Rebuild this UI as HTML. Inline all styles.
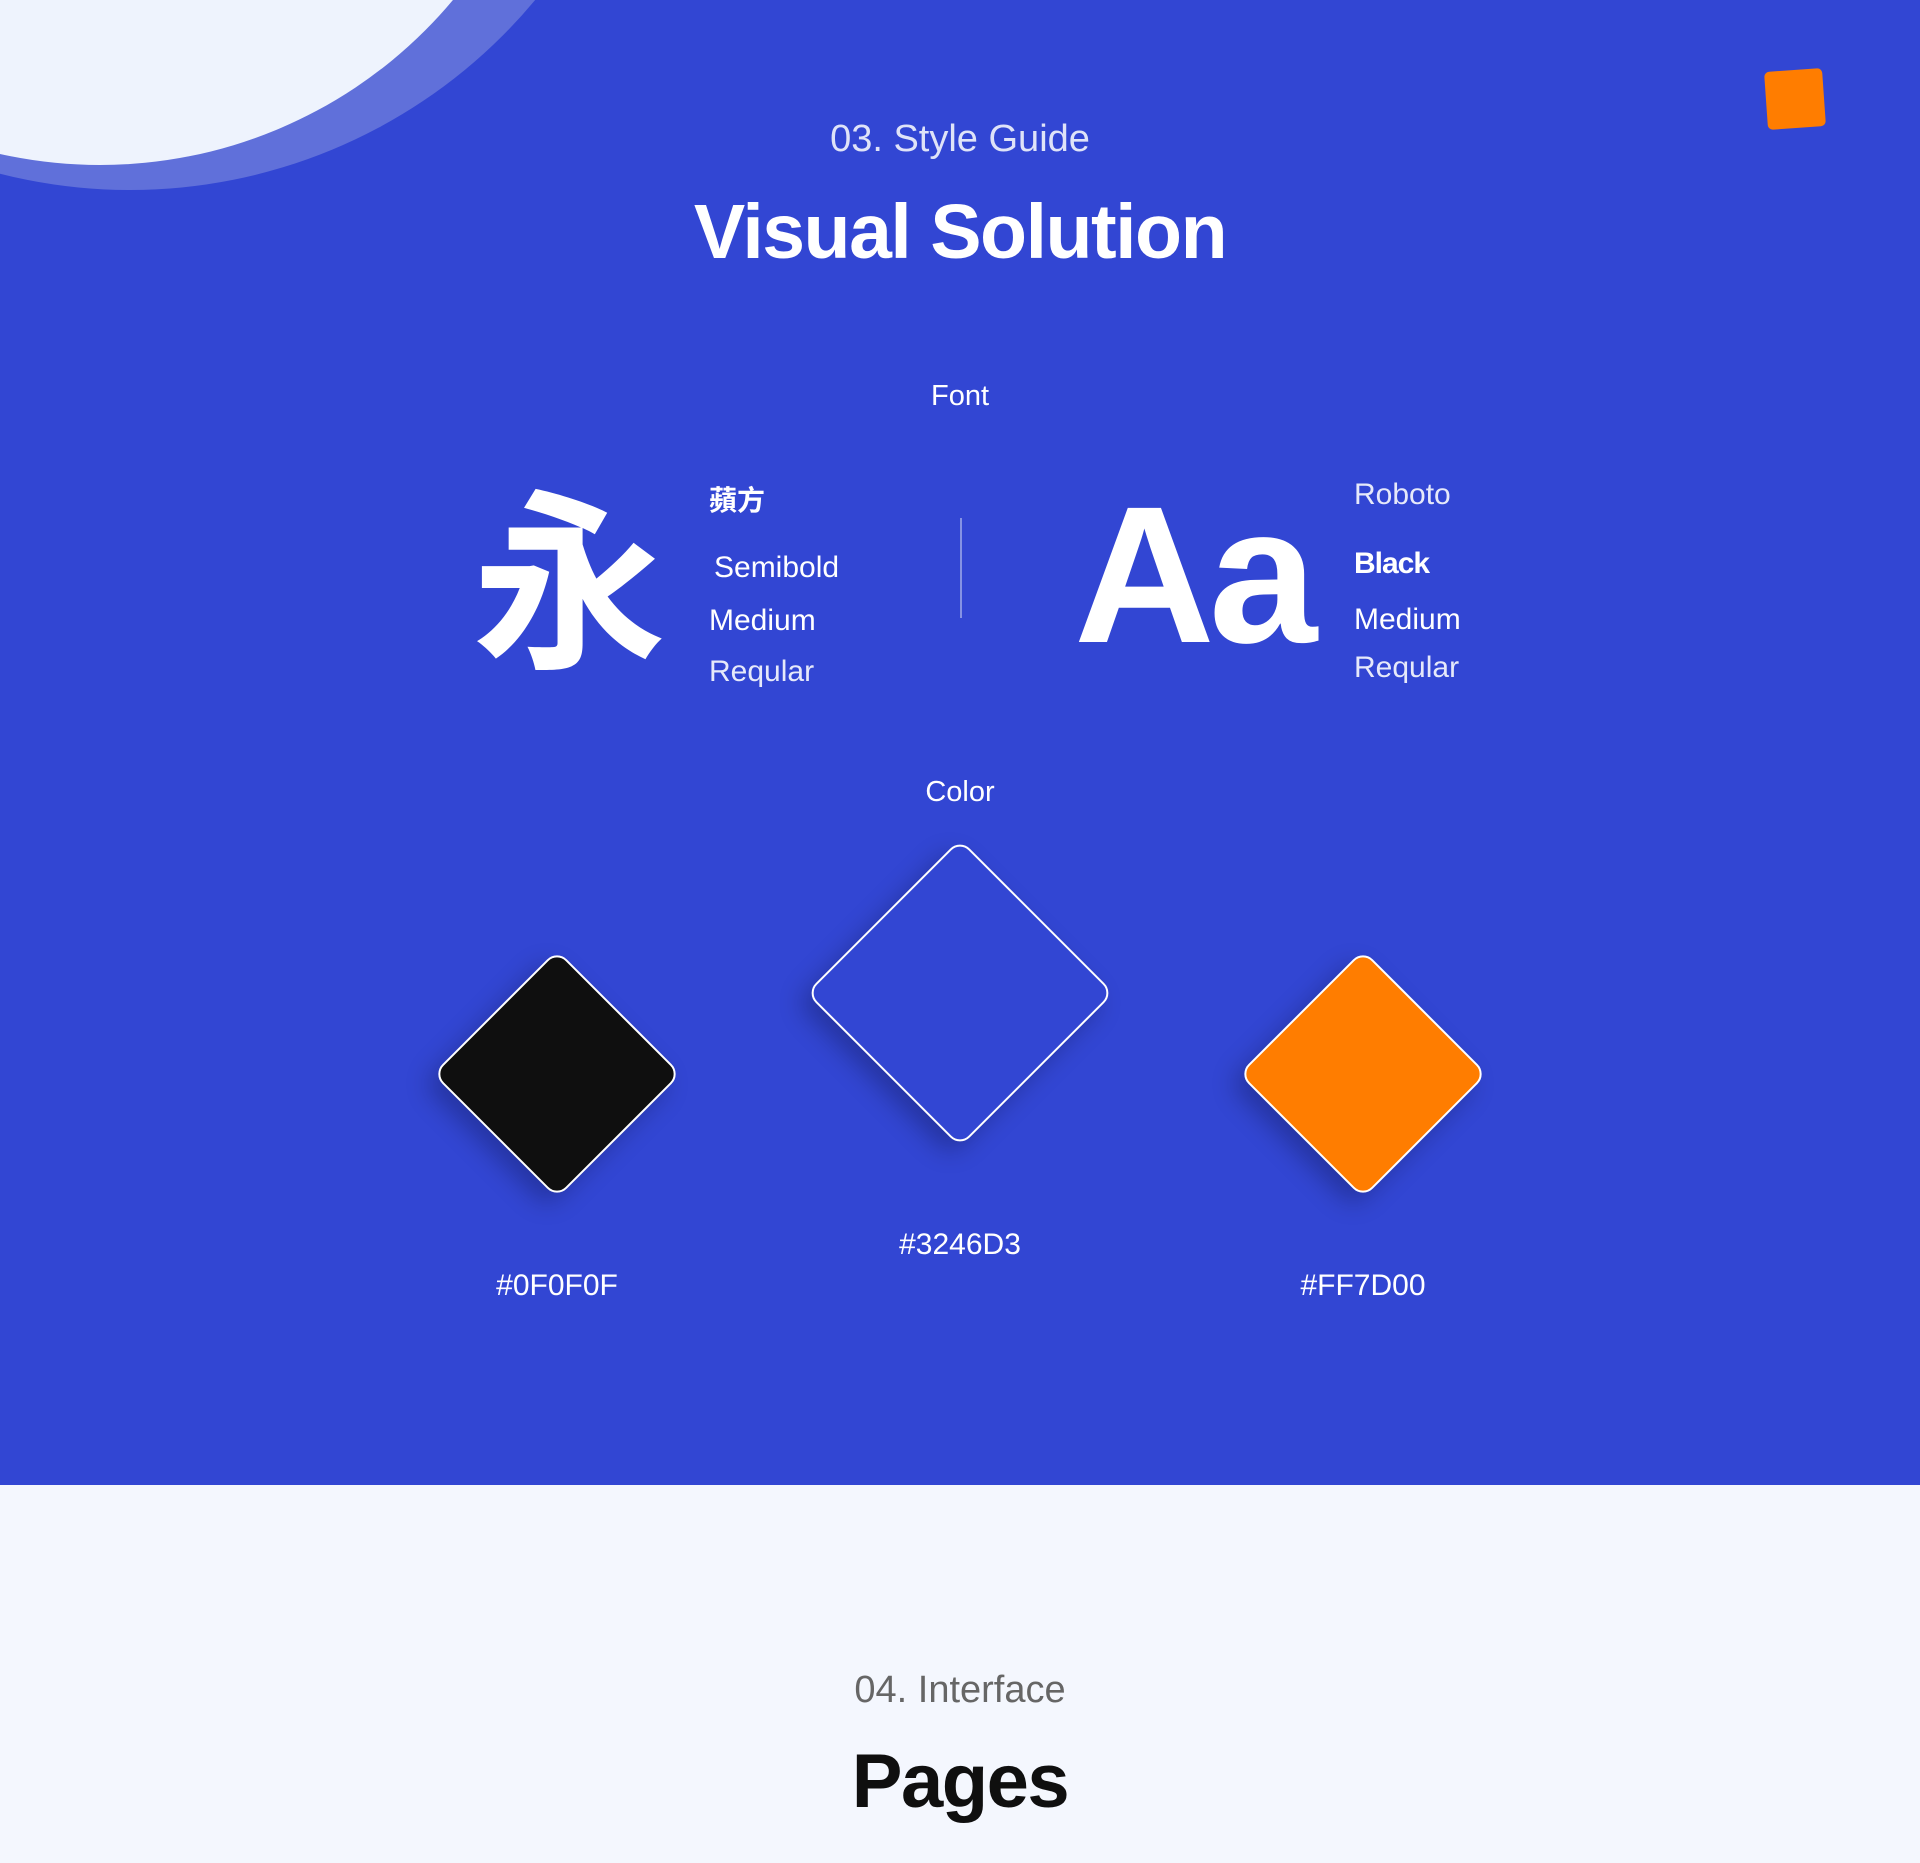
<!DOCTYPE html>
<html><head><meta charset="utf-8"><style>
*{margin:0;padding:0;box-sizing:border-box}
body{width:1920px;height:1863px;overflow:hidden;font-family:"Liberation Sans","Noto Sans CJK TC",sans-serif;background:#f4f7fe;position:relative}
.blue{position:absolute;left:0;top:0;width:1920px;height:1485px;background:#3246d3;overflow:hidden}
.c{position:absolute;border-radius:50%}
.t{position:absolute;color:#fff;white-space:nowrap}
.ctr{left:0;width:1920px;text-align:center}
.d{position:absolute;border:2px solid #fff;border-radius:14px;transform:rotate(45deg);box-shadow:0 14px 24px rgba(0,0,20,.25)}
</style></head><body>
<div class="blue">
<div class="c" style="left:-397px;top:-864px;width:1054px;height:1054px;background:#6070da"></div>
<div class="c" style="left:-360px;top:-755px;width:920px;height:920px;background:#eef3fd"></div>
<div style="position:absolute;left:1766px;top:70px;width:58px;height:58px;background:#ff7d00;border-radius:5px;transform:rotate(-4deg)"></div>
<div class="t ctr" style="top:118px;font-size:38px;color:#dfe3f8">03. Style Guide</div>
<div class="t ctr" style="top:188px;font-size:77px;font-weight:bold;letter-spacing:-1.5px">Visual Solution</div>
<div class="t ctr" style="top:380px;font-size:29px">Font</div>
<div class="t" style="left:472px;top:472px;font-size:194px;line-height:1;font-family:'Noto Sans CJK TC',sans-serif;font-weight:bold">永</div>
<div class="t" style="left:709px;top:479px;font-size:28px;font-weight:bold;font-family:'Noto Sans CJK TC',sans-serif">蘋方</div>
<div class="t" style="left:714px;top:551px;font-size:30px">Semibold</div>
<div class="t" style="left:709px;top:604px;font-size:30px">Medium</div>
<div class="t" style="left:709px;top:655px;font-size:30px;color:#e6e9fa">Reqular</div>
<div style="position:absolute;left:960px;top:518px;width:2px;height:100px;background:#8592e4"></div>
<div class="t" style="left:1074px;top:478px;font-size:195px;font-weight:bold;line-height:1;letter-spacing:-6px">Aa</div>
<div class="t" style="left:1354px;top:478px;font-size:30px;color:#e6e9fa">Roboto</div>
<div class="t" style="left:1354px;top:547px;font-size:30px;font-weight:bold;letter-spacing:-1px">Black</div>
<div class="t" style="left:1354px;top:603px;font-size:30px">Medium</div>
<div class="t" style="left:1354px;top:651px;font-size:30px;color:#e6e9fa">Reqular</div>
<div class="t ctr" style="top:776px;font-size:29px">Color</div>
<div class="d" style="left:469px;top:986px;width:176px;height:176px;background:#0f0f0f"></div>
<div class="d" style="left:851px;top:884px;width:218px;height:218px;background:#3246d3"></div>
<div class="d" style="left:1275px;top:986px;width:176px;height:176px;background:#ff7d00"></div>
<div class="t" style="left:457px;width:200px;text-align:center;top:1269px;font-size:30px">#0F0F0F</div>
<div class="t" style="left:860px;width:200px;text-align:center;top:1228px;font-size:30px">#3246D3</div>
<div class="t" style="left:1263px;width:200px;text-align:center;top:1269px;font-size:30px">#FF7D00</div>
</div>
<div class="t ctr" style="top:1669px;font-size:38px;color:#666">04. Interface</div>
<div class="t ctr" style="top:1738px;font-size:76px;font-weight:bold;color:#0f0f0f;letter-spacing:-1.5px">Pages</div>
</body></html>
